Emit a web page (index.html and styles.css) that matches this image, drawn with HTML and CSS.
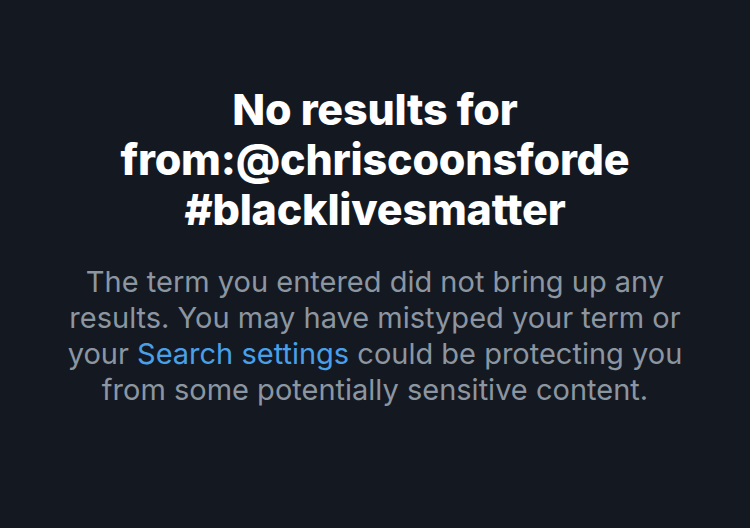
FILE: index.html
```html
<!DOCTYPE html>
<html>
<head>
<meta charset="utf-8">
<link rel="stylesheet" href="styles.css">
</head>
<body>
<main class="empty">
  <h1 class="title">No results for<br>from:@chriscoonsforde<br>#blacklivesmatter</h1>
  <p class="desc">The term you entered did not bring up any<br>results. You may have mistyped your term or<br>your <a class="link" href="#">Search settings</a> could be protecting you<br>from some potentially sensitive content.</p>
</main>
</body>
</html>
```
FILE: styles.css
```css
html, body {
  margin: 0;
  padding: 0;
  background: #141921;
  width: 750px;
  height: 528px;
  overflow: hidden;
}
.empty {
  display: flex;
  flex-direction: column;
  align-items: center;
  padding-top: 84px;
  font-family: Inter, "Noto Sans", sans-serif;
  text-align: center;
}
.title {
  margin: 0;
  color: #ffffff;
  font-size: 43px;
  font-weight: 800;
  line-height: 50px;
  letter-spacing: -0.2px;
}
.desc {
  margin: 30px 0 0;
  color: #8c96a1;
  font-size: 29px;
  font-weight: 400;
  line-height: 36px;
}
.link {
  color: #4aa0e8;
  text-decoration: none;
}
```
